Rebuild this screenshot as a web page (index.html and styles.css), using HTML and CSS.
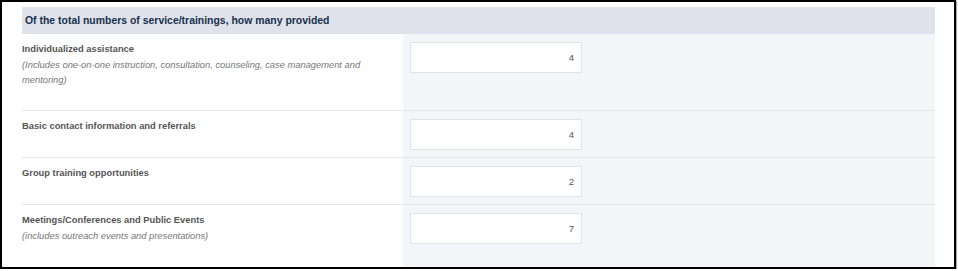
FILE: index.html
```html
<!DOCTYPE html>
<html>
<head>
	<meta http-equiv="Content-Type" content="text/html;charset=UTF-8">
	<title>Services provided</title>
	<link rel="stylesheet" href="styles.css">
</head>
<body>
	<div class="frame">
		<div class="section_head">Of the total numbers of service/trainings, how many provided</div>
		<div class="rows">
			<div class="row">
				<div class="label">
					<p class="name">Individualized assistance</p>
					<p class="note">(Includes one-on-one instruction, consultation, counseling, case management and mentoring)</p>
				</div>
				<div class="field"><input type="text" value="4" readonly></div>
			</div>
			<div class="row">
				<div class="label">
					<p class="name">Basic contact information and referrals</p>
				</div>
				<div class="field"><input type="text" value="4" readonly></div>
			</div>
			<div class="row">
				<div class="label">
					<p class="name">Group training opportunities</p>
				</div>
				<div class="field"><input type="text" value="2" readonly></div>
			</div>
			<div class="row last">
				<div class="label">
					<p class="name">Meetings/Conferences and Public Events</p>
					<p class="note">(includes outreach events and presentations)</p>
				</div>
				<div class="field"><input type="text" value="7" readonly></div>
			</div>
		</div>
	</div>
</body>
</html>
```
FILE: styles.css
```css
*{
	margin: 0;
	padding: 0;
	box-sizing: border-box;
}
body{
	background-color: #fff;
	font-family: "Liberation Sans", Arial, sans-serif;
}
.frame{
	width: 956px;
	height: 269px;
	border: 2px solid #000;
	padding: 5px 19px 0 20px;
	overflow: hidden;
	background-color: #fff;
	box-shadow: 1px 1px 0 #a9a9a9;
}
.section_head{
	height: 27px;
	line-height: 27px;
	padding-left: 3px;
	background-color: #dfe2ea;
	color: #17304d;
	font-size: 10.45px;
	font-weight: bold;
}
.row{
	display: grid;
	grid-template-columns: 381px 1fr;
	border-top: 1px solid #e4e6eb;
}
.row:first-child{
	border-top: none;
}
.row.last .label{
	padding-bottom: 30px;
}
.label{
	padding: 8px 0 22px 0;
}
.label .name{
	font-size: 9.33px;
	line-height: 14px;
	font-weight: bold;
	color: #555;
}
.label .note{
	margin-top: 2px;
	font-size: 9.33px;
	line-height: 15px;
	font-style: italic;
	color: #777;
	padding-right: 18px;
}
.field{
	background-color: #f4f5f9;
	padding: 8px 0 7px 7px;
}
.field input{
	display: block;
	width: 172px;
	height: 31px;
	border: 1px solid #dfe2e6;
	background-color: #fff;
	text-align: right;
	padding-right: 7px;
	font-family: "Liberation Sans", Arial, sans-serif;
	font-size: 9.6px;
	color: #555;
	outline: none;
}
```
